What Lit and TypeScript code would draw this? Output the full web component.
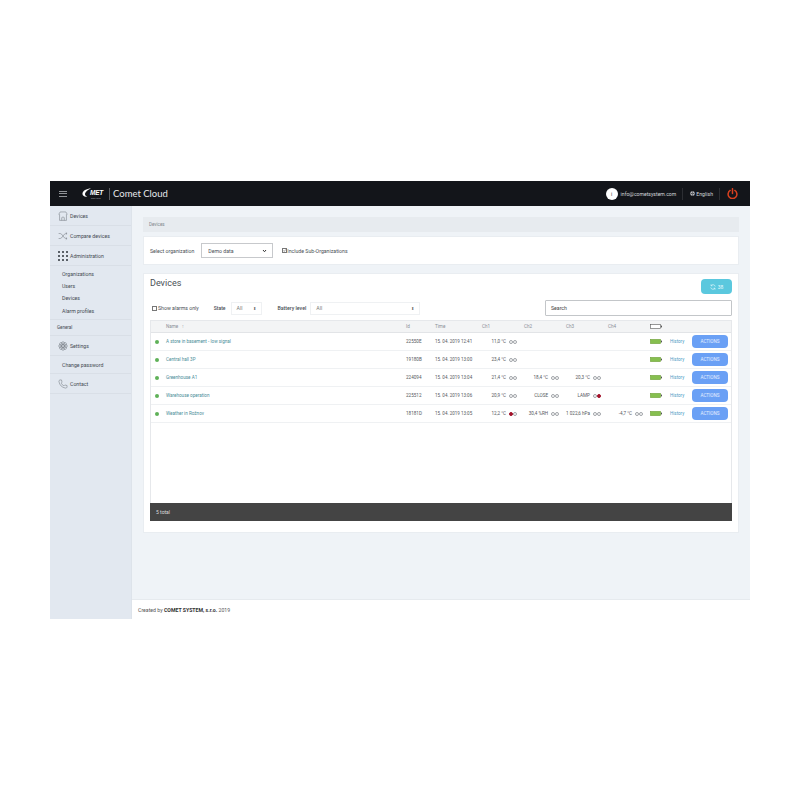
import { LitElement, html, css, svg } from "lit";
import { customElement } from "lit/decorators.js";

const rows = [
  { name: "A store in basement - low signal", id: "22550E", time: "15. 04. 2019 12:41", ch: [["11,0 °C", ""], null, null, null] },
  { name: "Central hall 3P", id: "19180B", time: "15. 04. 2019 13:00", ch: [["23,4 °C", ""], null, null, null] },
  { name: "Greenhouse A1", id: "224094", time: "15. 04. 2019 13:04", ch: [["21,4 °C", ""], ["18,4 °C", ""], ["20,3 °C", ""], null] },
  { name: "Warehouse operation", id: "225512", time: "15. 04. 2019 13:06", ch: [["20,9 °C", ""], ["CLOSE", ""], ["LAMP", "right"], null] },
  { name: "Weather in Rožnov", id: "18181D", time: "15. 04. 2019 13:05", ch: [["12,2 °C", "left"], ["30,4 %RH", ""], ["1 022,6 hPa", ""], ["-4,7 °C", ""]] },
];

const icons: Record<string, unknown> = {
  home: svg`<path d="M2.5 5 V15 H13.5 V5 M1 5.5 L3.5 1.5 H12.5 L15 5.5 M6 15 V10.5 Q8 8.5 10 10.5 V15"/>`,
  shuffle: svg`<path d="M1 4 H3.5 Q5.5 4 8 8 Q10.5 12 12.5 12 H14 M1 12 H3.5 Q5.5 12 8 8 Q10.5 4 12.5 4 H14 M12.5 2.2 L14.5 4 L12.5 5.8 M12.5 10.2 L14.5 12 L12.5 13.8"/>`,
  gear: svg`<circle cx="8" cy="8" r="2"/><circle cx="8" cy="3.4" r="2.2"/><circle cx="8" cy="12.6" r="2.2"/><circle cx="3.4" cy="8" r="2.2"/><circle cx="12.6" cy="8" r="2.2"/><circle cx="4.7" cy="4.7" r="2.2"/><circle cx="11.3" cy="4.7" r="2.2"/><circle cx="4.7" cy="11.3" r="2.2"/><circle cx="11.3" cy="11.3" r="2.2"/>`,
  phone: svg`<path d="M3 1.5 L5.5 1.5 L6.5 5 L5 6.5 Q6.5 9.5 9.5 11 L11 9.5 L14.5 10.5 L14.5 13 Q14 14.5 12 14.5 Q3 13 1.5 4 Q1.5 2 3 1.5 Z"/>`,
};

@customElement("app-root")
export class AppRoot extends LitElement {
  static styles = css`
    :host {
      display: block;
      padding: 181px 50px;
      font-family: Roboto, "Liberation Sans", sans-serif;
      font-size: 5px;
      color: #4a4f55;
      background: #fff;
    }
    * { box-sizing: border-box; }
    .topbar {
      height: 25px;
      background: #13151a;
      display: flex;
      align-items: center;
      color: #fff;
    }
    .burger { width: 8px; height: 6px; margin-left: 9px; border-top: 1px solid #8f9296; border-bottom: 1px solid #8f9296; position: relative; }
    .burger::after { content: ""; position: absolute; left: 0; right: 0; top: 1.5px; height: 1px; background: #8f9296; }
    .logo { margin-left: 15px; width: 24px; display: flex; flex-direction: column; }
    .logo-top { display: flex; align-items: center; height: 8px; }
    .logo-top svg { width: 9px; height: 9px; flex: none; }
    .logo-top span { margin-left: -1px; font: italic 900 6.5px/8px "Liberation Sans", sans-serif; letter-spacing: -0.2px; }
    .logo small { margin: 0 0 0 9px; font: 400 2px/2px "Liberation Sans", sans-serif; color: #bbb; }
    .brand { margin-left: 3px; padding-left: 3px; border-left: 1px solid #5c5e62; font: 400 9.5px/12px Lato, Roboto, sans-serif; color: #e6e8eb; }
    .spacer { flex: 1; }
    .avatar { width: 12px; height: 12px; border-radius: 50%; background: #fff; color: #333; font-size: 5px; display: flex; align-items: center; justify-content: center; margin-right: 3px; }
    .mail { font-size: 5.1px; color: #d5d8dc; padding-right: 6px; }
    .lang { font-size: 5.2px; color: #d5d8dc; border-left: 1px solid #2c2e33; border-right: 1px solid #2c2e33; padding: 0 6px 0 7px; height: 12px; display: flex; align-items: center; gap: 1px; }
    .power { margin: 0 12px 0 7px; width: 11px; height: 11px; }
    .body { display: flex; height: 413px; }
    .side { width: 82px; background: #e2e8f0; border-right: 1px solid #dde3ea; color: #454b52; }
    .item { height: 20px; display: flex; align-items: center; gap: 2px; padding-left: 8px; border-bottom: 1px solid #d9dfe7; font-size: 5.2px; }
    .item svg { width: 10px; height: 10px; flex: none; fill: none; stroke: #5a6067; stroke-width: 0.7; }
    .sub { padding: 2px 0 3px 12px; border-bottom: 1px solid #d9dfe7; height: 54px; }
    .sub div { height: 12.2px; display: flex; align-items: center; font-size: 5.2px; }
    .sub.single { height: 18px; padding: 0 0 0 12px; }
    .sub.single div { height: 17px; }
    .section { height: 16px; display: flex; align-items: center; padding-left: 7px; font-size: 4.5px; border-bottom: 1px solid #d9dfe7; }
    .dots { width: 10px; height: 10px; display: grid; grid-template-columns: repeat(3, 2px); grid-auto-rows: 2px; gap: 2px; flex: none; }
    .dots i { background: #5a6067; }
    .main { flex: 1; background: #eff3f7; display: flex; flex-direction: column; min-width: 0; }
    .content { flex: 1; padding: 11px 11px 0 11px; }
    .crumb { height: 15px; background: #e7ebef; padding-left: 6px; display: flex; align-items: center; color: #80868c; font-size: 4.5px; }
    .card { background: #fff; border: 1px solid #e9edf1; }
    .org { margin-top: 4px; height: 29px; display: flex; align-items: center; padding-left: 6px; font-size: 5.2px; }
    .select { border: 1px solid #c7c9cc; height: 15px; width: 72px; margin-left: 7px; display: flex; align-items: center; justify-content: space-between; padding: 0 5px 0 6px; font-size: 5.2px; }
    .select svg { width: 5px; height: 4px; }
    .chk { width: 5px; height: 5px; border: 0.5px solid #777; flex: none; display: block; }
    .org .chk { margin-left: 9px; margin-right: 0; }
    .devices { margin-top: 8px; height: 260px; padding: 0 6px; }
    .dev-head { display: flex; justify-content: space-between; align-items: flex-start; height: 26px; padding-top: 5px; }
    h2 { margin: -2px 0 0; font: 400 9px/12px Roboto, sans-serif; color: #4a4f55; }
    .sync { width: 31px; height: 15px; background: #5bc8de; border-radius: 4px; color: #eafafd; display: flex; align-items: center; justify-content: center; gap: 2px; font-size: 5px; }
    .sync svg { width: 6px; height: 6px; }
    .filters { display: flex; align-items: center; height: 16px; font-size: 5.2px; }
    .filters .chk { margin-left: 2px; margin-right: 1px; }
    .filters b { font-weight: 500; margin-left: 15px; font-size: 5px; }
    .filters b.battery { margin-left: 16px; font-size: 5.2px; }
    .mini { height: 13px; border: 1px solid #eff1f3; margin-left: 5px; display: flex; align-items: center; justify-content: space-between; padding: 0 5px; color: #777; }
    .mini span { font-size: 4px; color: #555; }
    .mini.short { width: 31px; }
    .mini.long { width: 110px; margin-left: 4px; }
    .search { margin-left: auto; width: 187px; height: 16px; border: 1px solid #c3c6c9; border-radius: 1px; padding-left: 5px; display: flex; align-items: center; color: #444; }
    .grid { display: grid; grid-template-columns: 11px 240px 29px 45px 42px 42px 42px 42px 22px 24px 40px; align-items: center; }
    .table { margin-top: 4px; height: 201px; border: 1px solid #e6e8eb; border-bottom: none; display: flex; flex-direction: column; }
    .thead { height: 12px; background: #f3f4f5; border-bottom: 1px solid #e2e4e7; color: #8a8f95; font-size: 4.6px; flex: none; }
    .row { height: 18px; border-bottom: 1px solid #eff1f3; font-size: 4.6px; color: #55595e; flex: none; }
    .thead > span { padding-left: 4px; }
    .thead .c { padding-left: 6px; }
    .thead .bat { padding-left: 6px; display: flex; }
    .dot { width: 4px; height: 4px; border-radius: 50%; background: #5fb158; margin-left: 4px; }
    .name { color: #4a8d98; padding-left: 4px; }
    .idc { padding-left: 4px; }
    .time { padding-left: 4px; white-space: nowrap; font-size: 4.5px; }
    .ch { display: flex; justify-content: flex-end; align-items: center; gap: 3px; padding-right: 1px; white-space: nowrap; }
    .leds { display: flex; }
    .leds i { width: 4px; height: 4px; border: 0.5px solid #a0a4a8; border-radius: 50%; }
    .leds i.on { background: #a3122a; border-color: #a3122a; }
    .batt { width: 12px; height: 5px; display: block; }
    .batc { padding-left: 6px; }
    .hist { color: #4f9bc5; padding-left: 4px; font-size: 4.5px; }
    .act { width: 36px; height: 13px; margin-left: 2px; background: #6aa0f5; border-radius: 4px; color: #e6efff; display: flex; align-items: center; justify-content: center; font-size: 4.6px; }
    .total { margin: auto -1px 0; height: 18px; background: #444; color: #dcdcdc; display: flex; align-items: center; padding-left: 6px; font-size: 5px; flex: none; }
    .foot { height: 20px; background: #fff; border-top: 1px solid #e6eaee; display: flex; align-items: center; padding-left: 6px; font-size: 5.2px; color: #555; }
    .foot b { color: #333; }
  `;

  private led(state: string) {
    return html`<span class="leds"><i class=${state === "left" ? "on" : ""}></i><i class=${state === "right" ? "on" : ""}></i></span>`;
  }

  private battery(full: boolean) {
    return html`<svg class="batt" viewBox="0 0 12 5">
      <rect x="0.4" y="0.4" width="10.2" height="4.2" fill=${full ? "#86bf4f" : "#fff"} stroke=${full ? "#6f9f3a" : "#555"} stroke-width="0.6"></rect>
      <rect x="11" y="1.6" width="1" height="1.8" fill="#555"></rect>
    </svg>`;
  }

  private navIcon(name: string) {
    return html`<svg viewBox="0 0 16 16">${icons[name]}</svg>`;
  }

  render() {
    return html`
      <div class="topbar">
        <div class="burger"></div>
        <div class="logo">
          <div class="logo-top">
            <svg viewBox="0 0 10 10"><path d="M10 0.5 C5 0.5 0.5 3 0.5 6.5 C0.5 9 3 10 6 9.5 C4 9 3 8 3.4 6.2 C3.9 4 6.5 2 10 0.5 Z" fill="#fff"></path></svg>
            <span>MET</span>
          </div>
          <small>since 1991</small>
        </div>
        <div class="brand">Comet Cloud</div>
        <div class="spacer"></div>
        <div class="avatar">i</div>
        <div class="mail">info@cometsystem.com</div>
        <div class="lang">
          <svg width="5" height="5" viewBox="0 0 10 10"><circle cx="5" cy="5" r="4.5" fill="#e0e2e5"></circle><path d="M1 5 H9 M5 1 Q2 5 5 9 M5 1 Q8 5 5 9" stroke="#13151a" fill="none"></path></svg>
          English
        </div>
        <svg class="power" viewBox="0 0 16 16" fill="none" stroke="#d9401f" stroke-width="2.2" stroke-linecap="round">
          <path d="M4.6 3.6 A6.4 6.4 0 1 0 11.4 3.6"></path><path d="M8 1 V8"></path>
        </svg>
      </div>
      <div class="body">
        <nav class="side">
          <div class="item">${this.navIcon("home")}Devices</div>
          <div class="item">${this.navIcon("shuffle")}Compare devices</div>
          <div class="item">
            <span class="dots">${Array.from({ length: 9 }, () => html`<i></i>`)}</span>Administration
          </div>
          <div class="sub">
            <div>Organizations</div><div>Users</div><div>Devices</div><div>Alarm profiles</div>
          </div>
          <div class="section">General</div>
          <div class="item">${this.navIcon("gear")}Settings</div>
          <div class="sub single"><div>Change password</div></div>
          <div class="item">${this.navIcon("phone")}Contact</div>
        </nav>
        <div class="main">
          <div class="content">
            <div class="crumb">Devices</div>
            <div class="card org">
              Select organization
              <div class="select">
                Demo data
                <svg viewBox="0 0 10 8" fill="none" stroke="#333" stroke-width="2"><path d="M2 2 L5 5.5 L8 2"></path></svg>
              </div>
              <svg class="chk" viewBox="0 0 10 10" fill="none" stroke="#333" stroke-width="1.6"><path d="M1.5 5 L4.2 8 L9 1.5"></path></svg>
              Include Sub-Organizations
            </div>
            <div class="card devices">
              <div class="dev-head">
                <h2>Devices</h2>
                <div class="sync">
                  <svg viewBox="0 0 12 12" fill="none" stroke="#eafafd" stroke-width="1.3">
                    <path d="M10.5 5 A4.6 4.6 0 0 0 2.4 3.2 M1.5 7 A4.6 4.6 0 0 0 9.6 8.8"></path>
                    <path d="M2 0.8 V3.6 H4.8 M10 11.2 V8.4 H7.2"></path>
                  </svg>
                  38
                </div>
              </div>
              <div class="filters">
                <span class="chk"></span>Show alarms only
                <b>State</b>
                <div class="mini short">All <span>⬍</span></div>
                <b class="battery">Battery level</b>
                <div class="mini long">All <span>⬍</span></div>
                <div class="search">Search</div>
              </div>
              <div class="table">
                <div class="grid thead">
                  <span></span><span>Name &nbsp; ↑</span><span>Id</span><span>Time</span>
                  <span class="c">Ch1</span><span class="c">Ch2</span><span class="c">Ch3</span><span class="c">Ch4</span>
                  <span class="bat">${this.battery(false)}</span><span></span><span></span>
                </div>
                ${rows.map((r) => html`
                  <div class="grid row">
                    <span class="dot"></span>
                    <span class="name">${r.name}</span>
                    <span class="idc">${r.id}</span>
                    <span class="time">${r.time}</span>
                    ${r.ch.map((c) => c ? html`<span class="ch">${c[0]} ${this.led(c[1])}</span>` : html`<span></span>`)}
                    <span class="batc">${this.battery(true)}</span>
                    <span class="hist">History</span>
                    <span class="act">ACTIONS</span>
                  </div>
                `)}
                <div class="total">5 total</div>
              </div>
            </div>
          </div>
          <div class="foot">Created by&nbsp;<b>COMET SYSTEM, s.r.o.</b>&nbsp;2019</div>
        </div>
      </div>
    `;
  }
}
